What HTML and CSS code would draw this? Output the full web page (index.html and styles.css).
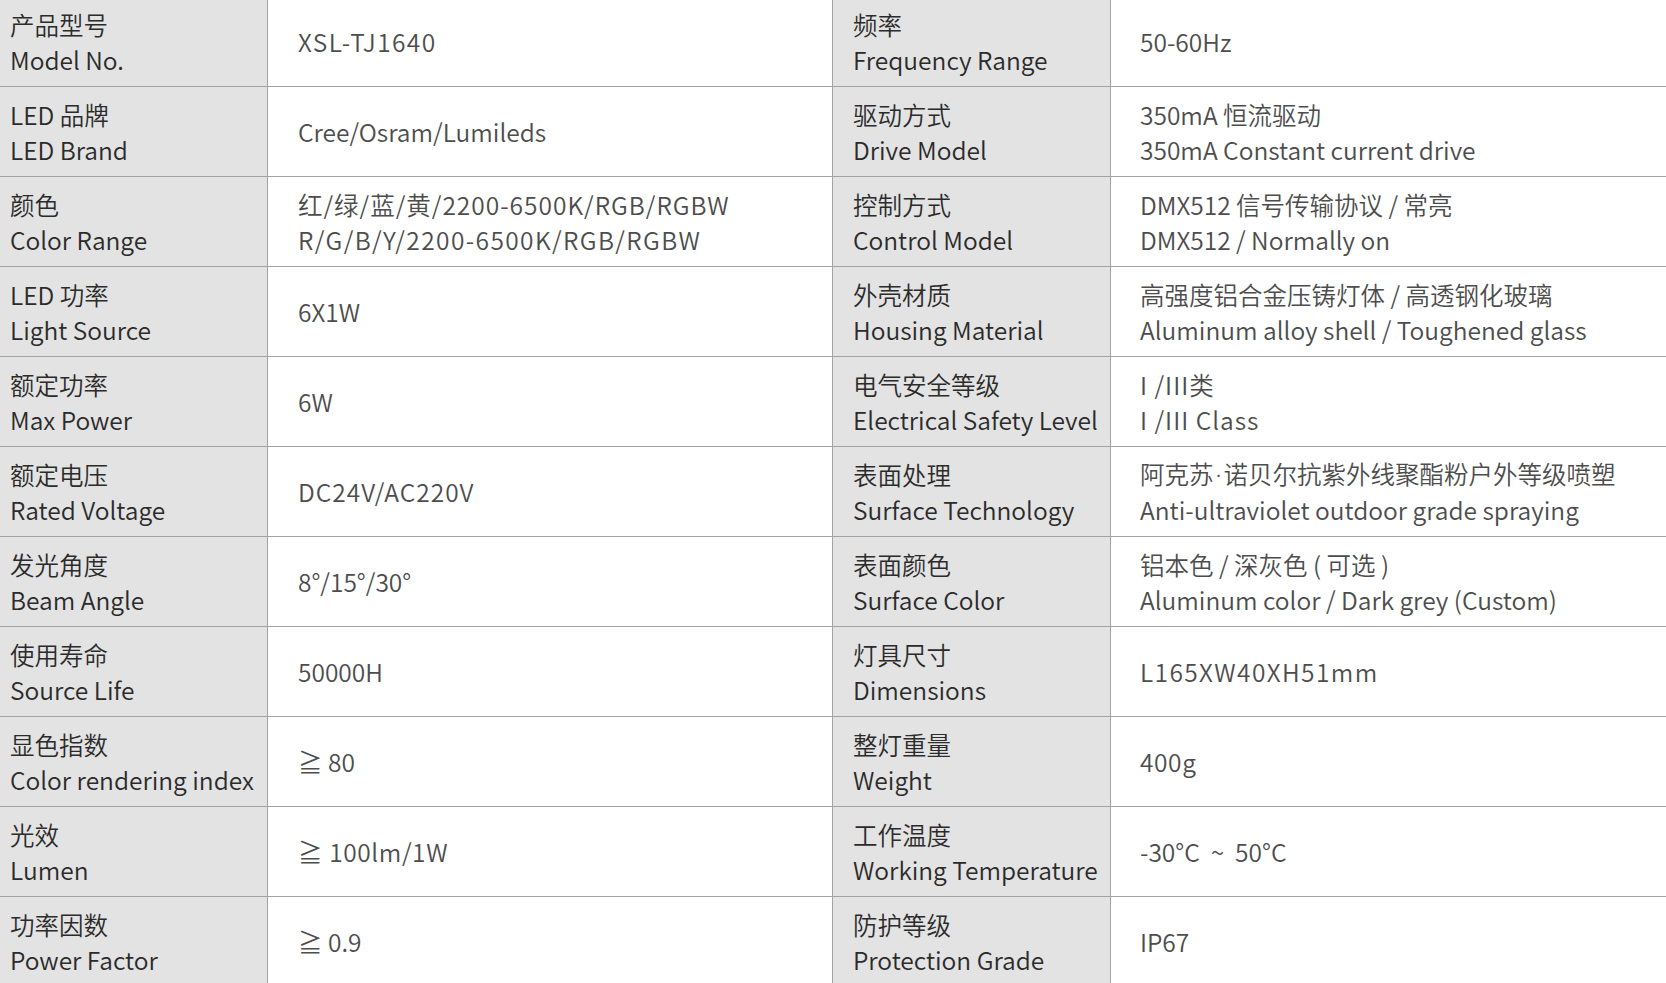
FILE: index.html
```html
<!DOCTYPE html>
<html lang="zh">
<head>
<meta charset="utf-8">
<title>XSL-TJ1640 参数</title>
<link rel="stylesheet" href="styles.css">
</head>
<body>
<div class="spec">
  <div class="k c1"><div>产品型号<br>Model No.</div></div>
  <div class="v c2 sp2"><div>XSL-TJ1640</div></div>
  <div class="k c3"><div>频率<br>Frequency Range</div></div>
  <div class="v c4"><div>50-60Hz</div></div>

  <div class="k c1"><div>LED 品牌<br>LED Brand</div></div>
  <div class="v c2"><div>Cree/Osram/Lumileds</div></div>
  <div class="k c3"><div>驱动方式<br>Drive Model</div></div>
  <div class="v c4"><div>350mA 恒流驱动<br>350mA Constant current drive</div></div>

  <div class="k c1"><div>颜色<br>Color Range</div></div>
  <div class="v c2 sp2"><div><span class="sp">红/绿/蓝/黄/2200-6500K/RGB/RGBW</span><br>R/G/B/Y/2200-6500K/RGB/RGBW</div></div>
  <div class="k c3"><div>控制方式<br>Control Model</div></div>
  <div class="v c4"><div>DMX512 信号传输协议 / 常亮<br>DMX512 / Normally on</div></div>

  <div class="k c1"><div>LED 功率<br>Light Source</div></div>
  <div class="v c2"><div>6X1W</div></div>
  <div class="k c3"><div>外壳材质<br>Housing Material</div></div>
  <div class="v c4"><div>高强度铝合金压铸灯体 / 高透钢化玻璃<br>Aluminum alloy shell / Toughened glass</div></div>

  <div class="k c1"><div>额定功率<br>Max Power</div></div>
  <div class="v c2"><div>6W</div></div>
  <div class="k c3"><div>电气安全等级<br>Electrical Safety Level</div></div>
  <div class="v c4 sp"><div>I /III类<br>I /III Class</div></div>

  <div class="k c1"><div>额定电压<br>Rated Voltage</div></div>
  <div class="v c2 sp"><div>DC24V/AC220V</div></div>
  <div class="k c3"><div>表面处理<br>Surface Technology</div></div>
  <div class="v c4"><div>阿克苏<span class="dot">·</span>诺贝尔抗紫外线聚酯粉户外等级喷塑<br>Anti-ultraviolet outdoor grade spraying</div></div>

  <div class="k c1"><div>发光角度<br>Beam Angle</div></div>
  <div class="v c2"><div>8°/15°/30°</div></div>
  <div class="k c3"><div>表面颜色<br>Surface Color</div></div>
  <div class="v c4"><div>铝本色 / 深灰色 ( 可选 )<br>Aluminum color / Dark grey (Custom)</div></div>

  <div class="k c1"><div>使用寿命<br>Source Life</div></div>
  <div class="v c2"><div>50000H</div></div>
  <div class="k c3"><div>灯具尺寸<br>Dimensions</div></div>
  <div class="v c4 sp2"><div>L165XW40XH51mm</div></div>

  <div class="k c1"><div>显色指数<br>Color rendering index</div></div>
  <div class="v c2"><div>≧ 80</div></div>
  <div class="k c3"><div>整灯重量<br>Weight</div></div>
  <div class="v c4 sp0"><div>400g</div></div>

  <div class="k c1"><div>光效<br>Lumen</div></div>
  <div class="v c2 sp0"><div>≧ 100lm/1W</div></div>
  <div class="k c3"><div>工作温度<br>Working Temperature</div></div>
  <div class="v c4"><div>-30°C &nbsp;~ &nbsp;50°C</div></div>

  <div class="k c1"><div>功率因数<br>Power Factor</div></div>
  <div class="v c2"><div>≧ 0.9</div></div>
  <div class="k c3"><div>防护等级<br>Protection Grade</div></div>
  <div class="v c4"><div>IP67</div></div>
</div>
</body>
</html>
```
FILE: styles.css
```css
html, body {
  margin: 0;
  padding: 0;
  background: #ffffff;
}
body {
  font-family: "Noto Sans CJK SC", "Noto Sans", sans-serif;
  font-size: 24.5px;
  font-weight: 350;
  line-height: 35px;
  overflow: hidden;
}
.spec {
  display: grid;
  grid-template-columns: 268px 565px 278px 1fr;
  grid-auto-rows: 90px;
  margin-top: -3px;
}
.spec > div {
  box-sizing: border-box;
  display: flex;
  align-items: center;
  white-space: nowrap;
  border-bottom: 1px solid #a3a3a3;
  border-right: 1px solid #a3a3a3;
}
.k {
  background: #e3e3e3;
  color: #2b2b2b;
}
.v {
  background: #ffffff;
  color: #4d4d4d;
}
.spec > .c4 {
  border-right: none;
}
.c1 { padding-left: 10px; }
.c2 { padding-left: 30px; }
.c3 { padding-left: 20px; }
.c4 { padding-left: 29px; }
.sp0 { letter-spacing: 0.6px; }
.sp { letter-spacing: 1px; }
.sp2 { letter-spacing: 1.4px; }
.sp2 .sp { letter-spacing: 1px; }
.dot {
  font-family: "Noto Sans", sans-serif;
  margin: 0 2px;
}
```
